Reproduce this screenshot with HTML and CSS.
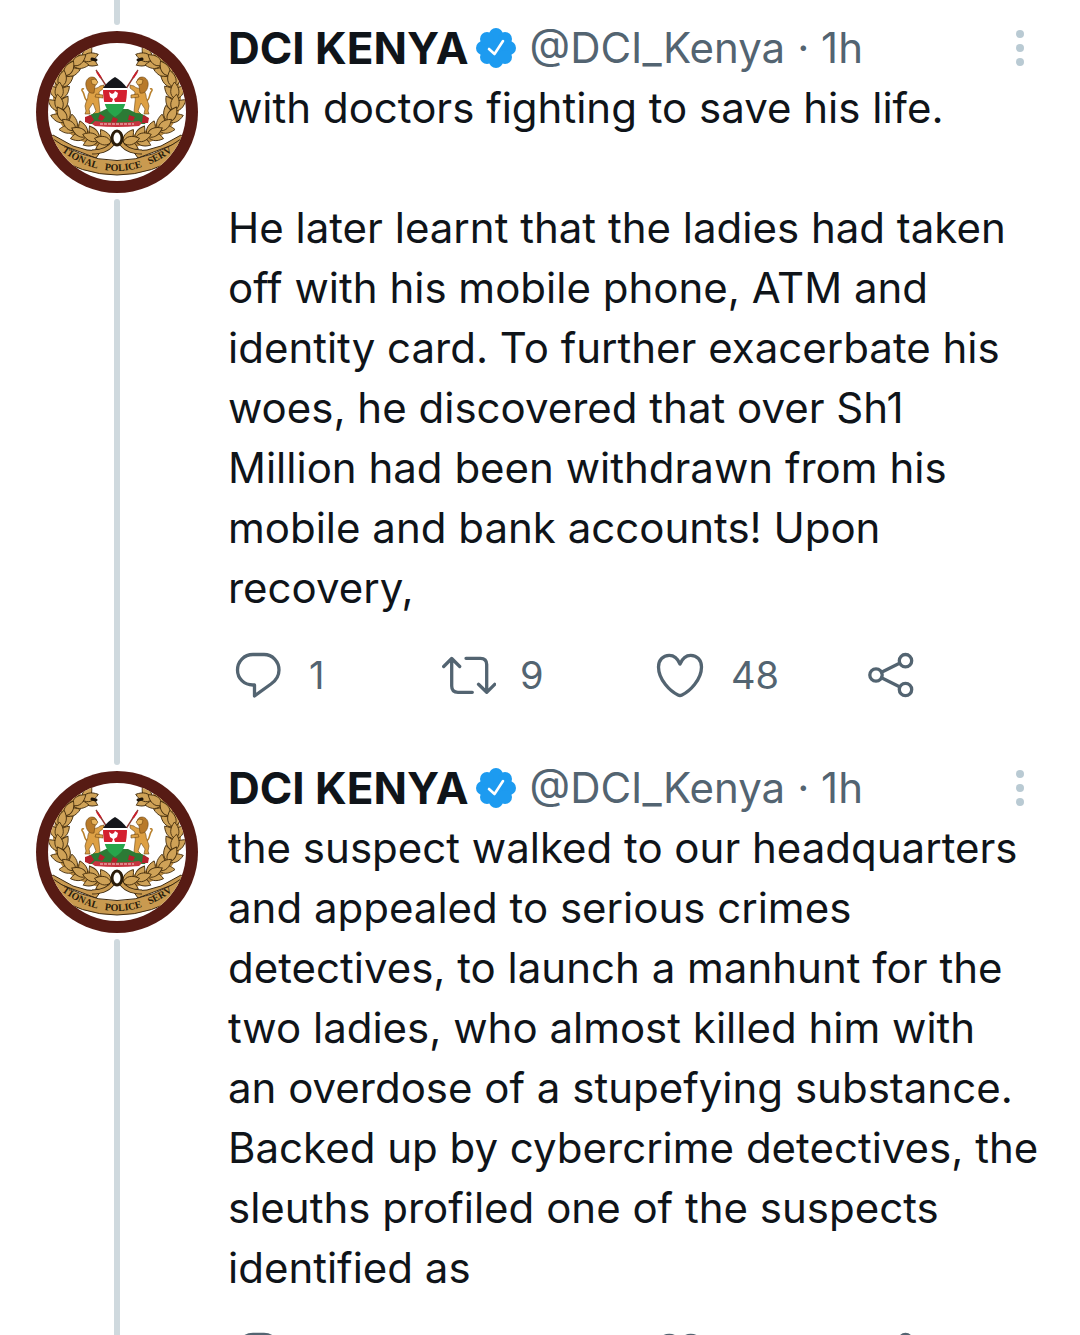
FILE: index.html
```
<!DOCTYPE html>
<html lang="en">

<head>
    <meta charset="UTF-8">
    <meta name="viewport" content="width=device-width, initial-scale=1.0">
    <title>DCI KENYA thread</title>
    <link rel="stylesheet" href="styles.css">
</head>

<body>
    <!-- shared icons -->
    <svg class="sprite" aria-hidden="true">
        <defs>
            <path id="leaf" d="M0 2C-6-2-5-9 0-15 5-9 6-2 0 2Z" />
            <g id="sprig">
                <use href="#leaf" transform="rotate(-42)" />
                <use href="#leaf" transform="rotate(42)" />
                <use href="#leaf" />
            </g>
            <g id="branch" fill="#cfa257" stroke="#4a3210" stroke-width="0.9">
                <path fill="none" stroke="#b98a42" stroke-width="12" d="M47 27Q23 42 23 66 24 104 74 112" />
                <use href="#sprig" transform="translate(48 28) rotate(72)" />
                <use href="#sprig" transform="translate(38 33) rotate(52)" />
                <use href="#sprig" transform="translate(30 43) rotate(30)" />
                <use href="#sprig" transform="translate(25 54) rotate(12)" />
                <use href="#sprig" transform="translate(23 66) rotate(2)" />
                <use href="#sprig" transform="translate(24 78) rotate(-10)" />
                <use href="#sprig" transform="translate(29 89) rotate(-30)" />
                <use href="#sprig" transform="translate(38 98) rotate(-50)" />
                <use href="#sprig" transform="translate(49 104) rotate(-62)" />
                <use href="#sprig" transform="translate(61 108) rotate(-72)" />
                <use href="#sprig" transform="translate(73 111) rotate(-76)" />
                <path fill="none" stroke="#1c140a" stroke-width="3" stroke-linecap="round" d="M56 28l4 1" />
            </g>
            <g id="lion" stroke="#6b4412" stroke-width="0.6">
                <path fill="none" stroke="#b8802c" stroke-width="1.600" d="M52 70c-4-1-3-6-5-9-2-2-1-4 1-3" />
                <path fill="#dda044"
                    d="M54 59c3-2 8-1 10-4l4-1v3l-5 4c1 4-1 7 0 10l1 10-2 2h-5l3-3-3-8-4 6 1 5h-5l1-3-1-5c1-5 3-7 3-11z" />
                <path fill="#dda044" d="M60 63l7 1v3l-8-1z" />
                <path fill="#b87a2a" d="M50 55c-1-5 2-9 6-9 3 0 5 2 5 5l-2 4-1 7c-4 1-7-2-8-7z" />
                <path fill="#e8b45c" d="M55 49l4-1 3 3-2 3-4-1z" />
            </g>
            <clipPath id="disc">
                <circle cx="81" cy="81" r="69" />
            </clipPath>
            <path id="motto" d="M11 109Q81 171 151 109" />
        </defs>

        <symbol id="emblem" viewBox="0 0 162 162">
            <circle cx="81" cy="81" r="81" fill="#571b14" />
            <circle cx="81" cy="81" r="69" fill="#fff" />
            <g clip-path="url(#disc)">
                <g fill="#c99a50" stroke="#3d2a10" stroke-width="1">
                    <path d="M12 108l14 6 34 13 5-7-14-1-14-4-20-11z" />
                    <path d="M150 108l-14 6-34 13-5-7 14-1 14-4 20-11z" />
                    <path d="M8 102Q81 157 154 102L150 122Q81 166 12 122Z" />
                </g>
                <use href="#branch" />
                <use href="#branch" transform="translate(162 0) scale(-1 1)" />
            </g>
            <!-- knot -->
            <g fill="none">
                <path stroke="#3d2a10" stroke-width="5" d="M56 121c12 0 19-5 22-11l2-7q1-2 2 0l2 7c3 6 10 11 22 11" />
                <path stroke="#c99a50" stroke-width="3" d="M56 121c12 0 19-5 22-11M84 110c3 6 10 11 22 11" />
                <ellipse cx="81" cy="107" rx="5" ry="7" fill="#fff" stroke="#2a1c0a" stroke-width="3" />
            </g>
            <!-- coat of arms -->
            <path fill="none" stroke="#8f3a34" stroke-width="1.400" d="M60 39l16 25M102 39L86 64" />
            <path fill="none" stroke="#c9202c" stroke-width="2" d="M61 41l4 6M101 41l-4 6" />
            <use href="#lion" />
            <use href="#lion" transform="translate(162 0) scale(-1 1)" />
            <path fill="#2c7a35" d="M50 87q5-5 12-5l8-4h22l8 4q7 0 12 5l-3 6H53z" />
            <path fill="#b5202c"
                d="M49 86l6-2 3 5-4 4-5-2zM64 83l5 3-3 4-4-2zM77 86l5 2-2 4-5-1zM93 84l6 2-2 4-5-1zM107 84l6 3-1 5-6 0z" />
            <path fill="#c7343f" d="M59 90q22 3 44 0l3 2-3 3q-22 2-44 0l-3-2z" />
            <path fill="none" stroke="#f2d7d4" stroke-width="1" stroke-dasharray="3 1" d="M64 93h34" />
            <clipPath id="shield">
                <path d="M79 46q7 4 12 11c0 14-2 23-12 29-10-6-12-15-12-29q5-7 12-11z" />
            </clipPath>
            <g clip-path="url(#shield)">
                <path fill="#15161b" d="M64 44h30v14H64z" />
                <path fill="#fff" d="M64 57h30v18H64z" />
                <path fill="#d4202f" d="M64 59h30v12H64z" />
                <path fill="#26a64b" d="M64 73h30v16H64z" />
            </g>
            <path fill="#fff" d="M73 61l3 2 2-1 1-2 3 2-1 4-3 2 1 3h-3l1-3-3-2z" />
        </symbol>

        <symbol id="verified" viewBox="0 0 40 40">
            <g fill="#1d9bf0">
                <circle cx="20" cy="20" r="15" />
                <circle cx="20" cy="7" r="7" />
                <circle cx="20" cy="33" r="7" />
                <circle cx="7" cy="20" r="7" />
                <circle cx="33" cy="20" r="7" />
                <circle cx="11" cy="11" r="7" />
                <circle cx="29" cy="11" r="7" />
                <circle cx="11" cy="29" r="7" />
                <circle cx="29" cy="29" r="7" />
            </g>
            <path fill="none" stroke="#fff" stroke-width="2.600" stroke-linecap="round" stroke-linejoin="round"
                d="M13 21l5.500 5 8.500-13" />
        </symbol>

        <symbol id="more" viewBox="0 0 8 36">
            <circle cx="4" cy="4" r="4" />
            <circle cx="4" cy="18" r="4" />
            <circle cx="4" cy="32" r="4" />
        </symbol>

        <symbol id="reply" viewBox="0 0 54 48">
            <path d="M22 3.500H33C41.500 3.500 48 10.500 48 19c0 6-3 10.500-8 14L23.500 45V34H22C13 34 6.500 27.500 6.500 19S13 3.500 22 3.500Z" />
        </symbol>
        <symbol id="retweet" viewBox="0 0 54 48">
            <path d="M1.700 15.500l8-8 8 8M9.700 8v27q0 6.300 6.300 6.300h14.300M24 7.300h14.400q6.300 0 6.300 6.300V41M36.500 33.300l8.200 8 8-8" />
        </symbol>
        <symbol id="like" viewBox="0 0 54 48">
            <path d="M27 13C24.500 7 20.500 4.300 16.300 4.300 9.800 4.300 5.500 9.500 5.500 16c0 13 12 24.500 19.500 28q2 1 4 0C36.500 40.500 48.500 29 48.500 16c0-6.500-4.300-11.700-10.800-11.700C33.500 4.300 29.500 7 27 13Z" />
        </symbol>
        <symbol id="share" viewBox="0 0 54 48">
            <circle cx="12" cy="24" r="6.200" />
            <circle cx="41.500" cy="9.700" r="6.200" />
            <circle cx="41.500" cy="38.500" r="6.200" />
            <path d="M17.500 21.300l18-9M17.500 26.700l18 9" />
        </symbol>
    </svg>

    <main class="thread">
        <div class="line_above"></div>

        <article class="tweet">
            <div class="rail">
                <svg class="avatar" viewBox="0 0 162 162">
                    <use href="#emblem" />
                    <text class="motto" text-anchor="middle"><textPath href="#motto" startOffset="50%">TIONAL&#160;&#160; POLICE&#160;&#160; SERV</textPath></text>
                </svg>
                <div class="line"></div>
            </div>
            <div class="content">
                <header class="head">
                    <a class="name" href="#">DCI KENYA</a>
                    <svg class="badge"><use href="#verified" /></svg>
                    <a class="handle" href="#">@DCI_Kenya</a>
                    <span class="time">· 1h</span>
                    <button class="more" aria-label="More"><svg><use href="#more" /></svg></button>
                </header>
                <p class="text">with doctors fighting to save his life.<br>
                    <br>
                    He later learnt that the ladies had taken<br>
                    off with his mobile phone, ATM and<br>
                    identity card. To further exacerbate his<br>
                    woes, he discovered that over Sh1<br>
                    Million had been withdrawn from his<br>
                    mobile and bank accounts! Upon<br>
                    recovery,</p>
                <div class="actions">
                    <button aria-label="Reply, 1"><svg><use href="#reply" /></svg>1</button>
                    <button aria-label="Retweet, 9"><svg><use href="#retweet" /></svg>9</button>
                    <button aria-label="Like, 48"><svg><use href="#like" /></svg>48</button>
                    <button aria-label="Share"><svg><use href="#share" /></svg></button>
                </div>
            </div>
        </article>

        <article class="tweet">
            <div class="rail">
                <svg class="avatar" viewBox="0 0 162 162">
                    <use href="#emblem" />
                    <text class="motto" text-anchor="middle"><textPath href="#motto" startOffset="50%">TIONAL&#160;&#160; POLICE&#160;&#160; SERV</textPath></text>
                </svg>
                <div class="line"></div>
            </div>
            <div class="content">
                <header class="head">
                    <a class="name" href="#">DCI KENYA</a>
                    <svg class="badge"><use href="#verified" /></svg>
                    <a class="handle" href="#">@DCI_Kenya</a>
                    <span class="time">· 1h</span>
                    <button class="more" aria-label="More"><svg><use href="#more" /></svg></button>
                </header>
                <p class="text">the suspect walked to our headquarters<br>
                    and appealed to serious crimes<br>
                    detectives, to launch a manhunt for the<br>
                    two ladies, who almost killed him with<br>
                    an overdose of a stupefying substance.<br>
                    Backed up by cybercrime detectives, the<br>
                    sleuths profiled one of the suspects<br>
                    identified as</p>
                <div class="actions">
                    <button aria-label="Reply"><svg><use href="#reply" /></svg></button>
                    <button aria-label="Retweet"><svg><use href="#retweet" /></svg></button>
                    <button aria-label="Like"><svg><use href="#like" /></svg></button>
                    <button aria-label="Share"><svg><use href="#share" /></svg></button>
                </div>
            </div>
        </article>
    </main>
</body>

</html>
```
FILE: styles.css
```
* {
    margin: 0;
    padding: 0;
    box-sizing: border-box;
}

body {
    background-color: #fff;
    color: #0f1419;
    font-family: Inter, "Liberation Sans", sans-serif;
    font-size: 42px;
    line-height: 60px;
}

a {
    color: inherit;
    text-decoration: none;
}

button {
    border: none;
    background: none;
    color: inherit;
    font: inherit;
    cursor: pointer;
}

.sprite {
    position: absolute;
    width: 0;
    height: 0;
}

.thread {
    height: 100vh;
    overflow: hidden;
}

.line_above {
    width: 6px;
    height: 25px;
    margin-left: 114px;
    border-radius: 0 0 3px 3px;
    background-color: #cfd9de;
}

.tweet {
    display: flex;
    gap: 30px;
    padding-left: 36px;
}

.rail {
    display: flex;
    flex-direction: column;
    align-items: center;
    gap: 6px;
    padding-top: 6px;
}

.avatar {
    flex: none;
    width: 162px;
    height: 162px;
}

.motto {
    fill: #2a1c0a;
    font-family: "Liberation Serif", serif;
    font-size: 10px;
    font-weight: bold;
}

.line {
    flex: 1;
    width: 6px;
    border-radius: 3px;
    background-color: #cfd9de;
}

.content {
    flex: 1;
    min-width: 0;
}

.head {
    display: flex;
    align-items: center;
    padding-right: 56px;
    padding-bottom: 7px;
    line-height: 46px;
    white-space: nowrap;
}

.name {
    font-size: 44px;
    font-weight: bold;
}

.badge {
    width: 40px;
    height: 40px;
    margin: 0 14px 0 7px;
}

.handle,
.time {
    color: #536471;
}

.time {
    margin-left: 12px;
}

.more {
    display: flex;
    margin-left: auto;
}

.more svg {
    width: 8px;
    height: 36px;
    fill: #b9cad3;
}

.text {
    white-space: nowrap;
}

.actions {
    display: grid;
    grid-template-columns: repeat(4, 1fr);
    padding: 33px 5px 66px 3px;
    color: #536471;
    font-size: 38px;
    line-height: 48px;
}

.actions button {
    display: flex;
    align-items: center;
    gap: 24px;
}

.actions svg {
    width: 54px;
    height: 48px;
    fill: none;
    stroke: #536471;
    stroke-width: 3.3px;
    stroke-linecap: round;
    stroke-linejoin: round;
}
```
